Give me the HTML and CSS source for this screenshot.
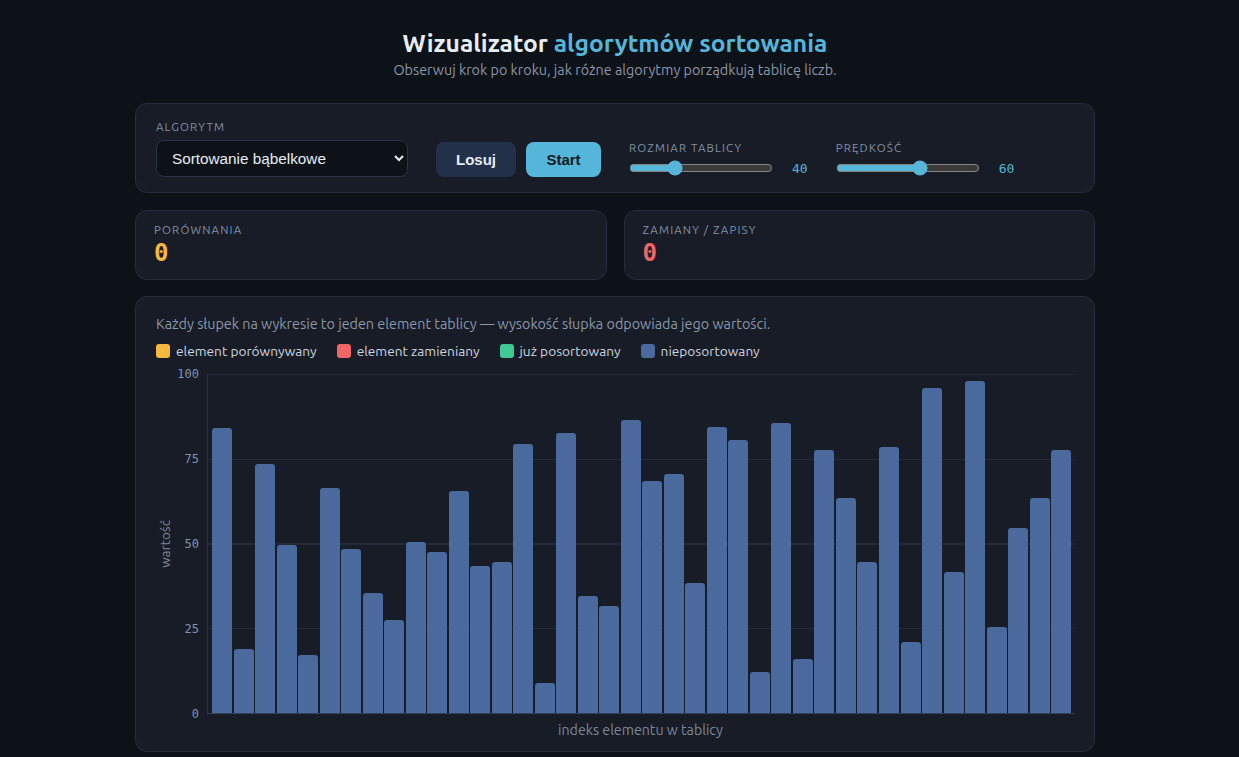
FILE: index.html
```html
<!DOCTYPE html>
<html lang="pl">
<head>
<meta charset="utf-8">
<title>Wizualizator algorytmów sortowania</title>
<link rel="stylesheet" href="styles.css">
</head>
<body>
<main class="page">
  <header class="hero">
    <h1 class="title">Wizualizator <span class="accent">algorytmów sortowania</span></h1>
    <p class="subtitle">Obserwuj krok po kroku, jak różne algorytmy porządkują tablicę liczb.</p>
  </header>

  <section class="panel controls">
    <div class="field">
      <label class="label" for="algo">Algorytm</label>
      <select id="algo" class="select">
        <option>Sortowanie bąbelkowe</option>
        <option>Sortowanie przez wstawianie</option>
        <option>Sortowanie przez wybieranie</option>
        <option>Sortowanie szybkie</option>
      </select>
    </div>
    <div class="buttons">
      <button class="btn btn-dark">Losuj</button>
      <button class="btn btn-primary">Start</button>
    </div>
    <div class="field field-range">
      <span class="label">Rozmiar tablicy</span>
      <div class="range-row">
        <input class="range" type="range" min="10" max="110" value="40">
        <span class="range-val">40</span>
      </div>
    </div>
    <div class="field field-range">
      <span class="label">Prędkość</span>
      <div class="range-row">
        <input class="range" type="range" min="0" max="100" value="60">
        <span class="range-val">60</span>
      </div>
    </div>
  </section>

  <section class="stats">
    <div class="panel stat">
      <span class="label">Porównania</span>
      <span class="stat-val yellow">0</span>
    </div>
    <div class="panel stat">
      <span class="label">Zamiany / zapisy</span>
      <span class="stat-val red">0</span>
    </div>
  </section>

  <section class="panel chart-card">
    <p class="desc">Każdy słupek na wykresie to jeden element tablicy — wysokość słupka odpowiada jego wartości.</p>
    <ul class="legend">
      <li><span class="sw sw-yellow"></span>element porównywany</li>
      <li><span class="sw sw-red"></span>element zamieniany</li>
      <li><span class="sw sw-green"></span>już posortowany</li>
      <li><span class="sw sw-blue"></span>nieposortowany</li>
    </ul>
    <div class="chart">
      <div class="y-title">wartość</div>
      <div class="y-labels">
        <span>100</span><span>75</span><span>50</span><span>25</span><span>0</span>
      </div>
      <div class="plot">
        <div class="bar" style="height:84%"></div>
        <div class="bar" style="height:19%"></div>
        <div class="bar" style="height:73.5%"></div>
        <div class="bar" style="height:49.5%"></div>
        <div class="bar" style="height:17%"></div>
        <div class="bar" style="height:66.5%"></div>
        <div class="bar" style="height:48.5%"></div>
        <div class="bar" style="height:35.5%"></div>
        <div class="bar" style="height:27.5%"></div>
        <div class="bar" style="height:50.5%"></div>
        <div class="bar" style="height:47.5%"></div>
        <div class="bar" style="height:65.5%"></div>
        <div class="bar" style="height:43.5%"></div>
        <div class="bar" style="height:44.5%"></div>
        <div class="bar" style="height:79.5%"></div>
        <div class="bar" style="height:9%"></div>
        <div class="bar" style="height:82.5%"></div>
        <div class="bar" style="height:34.5%"></div>
        <div class="bar" style="height:31.5%"></div>
        <div class="bar" style="height:86.5%"></div>
        <div class="bar" style="height:68.5%"></div>
        <div class="bar" style="height:70.5%"></div>
        <div class="bar" style="height:38.5%"></div>
        <div class="bar" style="height:84.5%"></div>
        <div class="bar" style="height:80.5%"></div>
        <div class="bar" style="height:12%"></div>
        <div class="bar" style="height:85.5%"></div>
        <div class="bar" style="height:16%"></div>
        <div class="bar" style="height:77.5%"></div>
        <div class="bar" style="height:63.5%"></div>
        <div class="bar" style="height:44.5%"></div>
        <div class="bar" style="height:78.5%"></div>
        <div class="bar" style="height:21%"></div>
        <div class="bar" style="height:96%"></div>
        <div class="bar" style="height:41.5%"></div>
        <div class="bar" style="height:98%"></div>
        <div class="bar" style="height:25.5%"></div>
        <div class="bar" style="height:54.5%"></div>
        <div class="bar" style="height:63.5%"></div>
        <div class="bar" style="height:77.5%"></div>
      </div>
      <div class="x-title">indeks elementu w tablicy</div>
    </div>
  </section>
</main>
</body>
</html>
```

FILE: styles.css
```css
* { box-sizing: border-box; }

html, body {
  margin: 0;
  padding: 0;
  background: #0d1118;
  color: #e6edf3;
  font-family: Ubuntu, Lato, "Noto Sans", sans-serif;
  color-scheme: dark;
}

body { padding-right: 9px; }

.page {
  width: 960px;
  margin: 0 auto;
  padding-top: 28px;
}

.hero { text-align: center; }

.title {
  margin: 0 0 2px;
  font-size: 24.6px;
  line-height: 30px;
  font-weight: 700;
  color: #e8eef5;
}
.accent { color: #56b6d9; }

.subtitle {
  margin: 0 0 23px;
  font-size: 14.35px;
  line-height: 20px;
  color: #8b97a8;
}

.panel {
  background: #171c26;
  border: 1px solid #262e3d;
  border-radius: 12px;
}

.controls {
  display: flex;
  align-items: flex-end;
  gap: 28px;
  padding: 16px 20px 15px;
}

.field {
  display: flex;
  flex-direction: column;
  gap: 6px;
}
.field-range { gap: 4px; }

.label {
  font-size: 11.5px;
  line-height: 14px;
  letter-spacing: 1.15px;
  text-transform: uppercase;
  color: #8492a6;
}

.select {
  width: 252px;
  height: 37px;
  padding: 0 10px 0 11px;
  background: #0d1118;
  color: #e6edf3;
  border: 1px solid #2b3445;
  border-radius: 8px;
  font-family: "Liberation Sans", Arial, sans-serif;
  font-size: 15.3px;
}

.buttons {
  display: flex;
  gap: 10px;
}

.btn {
  height: 35px;
  border: none;
  border-radius: 8px;
  font-family: "Liberation Sans", Arial, sans-serif;
  font-size: 15px;
  font-weight: 700;
  padding: 0;
}
.btn-dark {
  width: 80px;
  background: #23304a;
  color: #e6edf3;
}
.btn-primary {
  width: 75px;
  background: #56b6d9;
  color: #0f1a24;
}

.range-row {
  display: flex;
  align-items: center;
  gap: 19px;
  height: 18px;
}

.range {
  width: 144px;
  margin: 0;
  accent-color: #56b6d9;
}

.range-val {
  font-family: "DejaVu Sans Mono", monospace;
  font-size: 13px;
  color: #56b6d9;
}

.stats {
  display: grid;
  grid-template-columns: 1fr 1fr;
  gap: 17px;
  margin-top: 17px;
}

.stat {
  display: flex;
  flex-direction: column;
  gap: 2px;
  padding: 12px 18px 12px;
}

.stat-val {
  font-family: "DejaVu Sans Mono", monospace;
  font-size: 24px;
  line-height: 28px;
  font-weight: 700;
}
.yellow { color: #f5b841; }
.red { color: #f06565; }

.chart-card {
  margin-top: 16px;
  padding: 17px 20px 12px;
}

.desc {
  margin: 0;
  font-size: 14.35px;
  line-height: 20px;
  color: #8b97a8;
}

.legend {
  list-style: none;
  margin: 7px 0 0;
  padding: 0;
  display: flex;
  gap: 20px;
  font-size: 13.7px;
  line-height: 20px;
  color: #d0d7e0;
}
.legend li {
  display: flex;
  align-items: center;
  gap: 6px;
}
.sw {
  width: 14px;
  height: 14px;
  border-radius: 3px;
}
.sw-yellow { background: #f5b841; }
.sw-red { background: #f06565; }
.sw-green { background: #3ec996; }
.sw-blue { background: #4a6a9d; }

.chart {
  display: grid;
  grid-template-columns: 18px 33px 1fr;
  grid-template-rows: auto auto;
  margin-top: 13px;
}

.y-title {
  grid-row: 1;
  grid-column: 1;
  writing-mode: vertical-rl;
  transform: rotate(180deg);
  text-align: center;
  align-self: center;
  justify-self: center;
  font-size: 13.5px;
  color: #7c889a;
}

.y-labels {
  grid-row: 1;
  grid-column: 2;
  margin: -7px 0;
  padding-right: 8px;
  display: flex;
  flex-direction: column;
  justify-content: space-between;
  align-items: flex-end;
  font-family: "DejaVu Sans Mono", monospace;
  font-size: 12px;
  line-height: 14px;
  color: #7e93b5;
}

.plot {
  grid-row: 1;
  grid-column: 3;
  height: 340px;
  display: flex;
  align-items: flex-end;
  gap: 1.5px;
  padding: 0 3px 0 4px;
  border-left: 1px solid #2a3345;
  border-bottom: 1px solid #34405a;
  background-image: repeating-linear-gradient(to bottom, #222a39 0, #222a39 1px, transparent 1px, transparent 25%);
}

.bar {
  flex: 1;
  background: #4a6a9d;
  border-radius: 3px 3px 0 0;
}

.x-title {
  grid-row: 2;
  grid-column: 3;
  text-align: center;
  margin-top: 7px;
  font-size: 14.2px;
  line-height: 18px;
  color: #7c889a;
}
```
